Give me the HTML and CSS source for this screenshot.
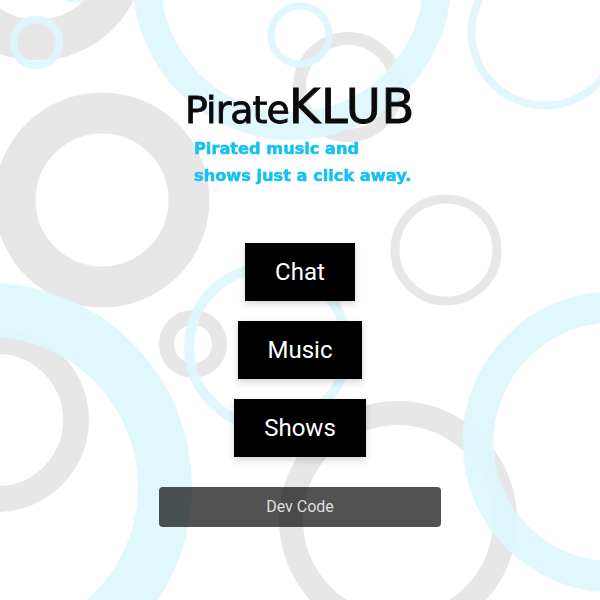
FILE: index.html
```html
<!DOCTYPE html>
<html lang="en">
<head>
<meta charset="utf-8">
<title>PirateKLUB</title>
<link rel="stylesheet" href="styles.css">
</head>
<body>
<svg class="rings" viewBox="0 0 600 600" aria-hidden="true">
  <g class="gray">
    <circle cx="37" cy="-47" r="87" stroke-width="41"/>
    <circle cx="348" cy="87" r="48.5" stroke-width="13"/>
    <circle cx="102" cy="200" r="87" stroke-width="41"/>
    <circle cx="446" cy="250" r="51" stroke-width="9"/>
    <circle cx="-3" cy="420" r="79" stroke-width="26"/>
    <circle cx="193" cy="344" r="26.5" stroke-width="15"/>
    <circle cx="398" cy="520" r="107" stroke-width="24"/>
  </g>
  <g class="blue">
    <circle cx="36.5" cy="42.5" r="23" stroke-width="7.5"/>
    <circle cx="75" cy="-25" r="24" stroke-width="7"/>
    <circle cx="292" cy="-19" r="145" stroke-width="28"/>
    <circle cx="300" cy="35" r="29" stroke-width="7"/>
    <circle cx="545" cy="32" r="73.5" stroke-width="8"/>
    <circle cx="-12" cy="487" r="177" stroke-width="54"/>
    <circle cx="268" cy="347" r="79" stroke-width="10"/>
    <circle cx="613" cy="442" r="135" stroke-width="31"/>
  </g>
</svg>
<main class="page">
  <header class="logo">
    <h1 class="brand"><span class="brand-a">Pirate</span><span class="brand-b">KLUB</span></h1>
    <p class="tagline">Pirated music and<br>shows just a click away.</p>
  </header>
  <nav class="menu">
    <a class="btn" href="#">Chat</a>
    <a class="btn" href="#">Music</a>
    <a class="btn" href="#">Shows</a>
  </nav>
  <a class="dev" href="#">Dev Code</a>
</main>
</body>
</html>
```
FILE: styles.css
```css
html, body {
  margin: 0;
  height: 100%;
  background: #fff;
}
body {
  position: relative;
  overflow: hidden;
  font-family: Roboto, "Liberation Sans", sans-serif;
}
.rings {
  position: absolute;
  left: 0;
  top: 0;
  width: 600px;
  height: 600px;
}
.rings circle { fill: none; }
.gray circle { stroke: #e7e7e7; }
.blue circle { stroke: #dcf6fd; opacity: 0.92; }
.page {
  position: relative;
  display: flex;
  flex-direction: column;
  align-items: center;
  padding-top: 80px;
}
.logo {
  width: 230px;
  height: 163px;
  filter: blur(0.3px);
}
.brand {
  margin: 0;
  height: 52px;
  display: flex;
  align-items: baseline;
  color: #0b0b0b;
  font-family: "DejaVu Sans", sans-serif;
  font-weight: 400;
  white-space: nowrap;
  line-height: 52px;
}
.brand-a {
  font-size: 38px;
  letter-spacing: -1px;
  -webkit-text-stroke: 0.8px #0b0b0b;
}
.brand-b {
  font-size: 48px;
  letter-spacing: 0.6px;
  -webkit-text-stroke: 0.9px #0b0b0b;
}
.tagline {
  margin: 3px 0 0 9px;
  color: #14c1f2;
  font-family: "DejaVu Sans", sans-serif;
  font-weight: 700;
  font-size: 16.2px;
  line-height: 27px;
  white-space: nowrap;
  -webkit-text-stroke: 0.5px #14c1f2;
}
.menu {
  display: flex;
  flex-direction: column;
  align-items: center;
  gap: 20px;
}
.btn {
  display: block;
  height: 58px;
  padding: 0 30px;
  background: #000;
  color: #fff;
  font-size: 24px;
  line-height: 58px;
  text-decoration: none;
  box-shadow: 0 3px 7px rgba(0, 0, 0, 0.17);
}
.dev {
  display: block;
  width: 282px;
  height: 40px;
  margin-top: 30px;
  border-radius: 4px;
  background: rgba(0, 0, 0, 0.68);
  color: rgba(255, 255, 255, 0.82);
  font-size: 16px;
  line-height: 40px;
  text-align: center;
  text-decoration: none;
}
```
